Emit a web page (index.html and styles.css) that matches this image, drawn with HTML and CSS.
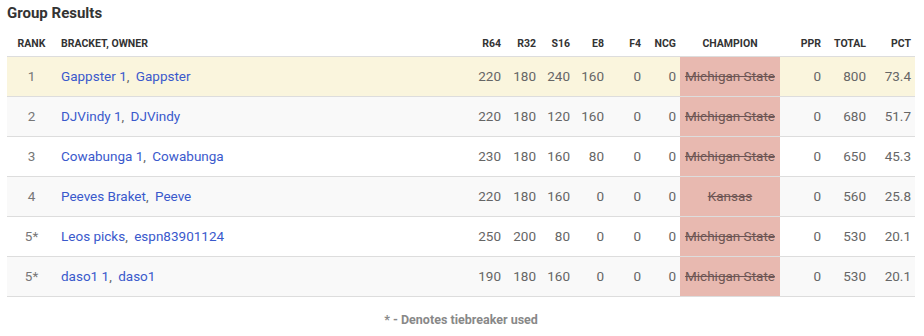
FILE: index.html
```html
<!DOCTYPE html>
<html>
<head>
<meta charset="utf-8">
<link rel="stylesheet" href="styles.css">
</head>
<body>
<div class="wrap">
  <h2 class="title">Group Results</h2>
  <table class="results">
    <colgroup>
      <col class="c-rank"><col class="c-bracket"><col class="c-n35"><col class="c-n35"><col class="c-n34"><col class="c-n34"><col class="c-n37"><col class="c-n35"><col class="c-champ"><col class="c-n45"><col class="c-n45"><col class="c-n45">
    </colgroup>
    <thead>
      <tr>
        <th class="rank">RANK</th>
        <th class="bracket">BRACKET, OWNER</th>
        <th class="num">R64</th>
        <th class="num">R32</th>
        <th class="num">S16</th>
        <th class="num">E8</th>
        <th class="num">F4</th>
        <th class="num">NCG</th>
        <th class="champ-h">CHAMPION</th>
        <th class="num">PPR</th>
        <th class="num">TOTAL</th>
        <th class="num">PCT</th>
      </tr>
    </thead>
    <tbody>
      <tr class="highlight">
        <td class="rank">1</td>
        <td class="bracket"><a href="#">Gappster 1</a>, <a class="owner" href="#">Gappster</a></td>
        <td class="num">220</td><td class="num">180</td><td class="num">240</td><td class="num">160</td><td class="num">0</td><td class="num">0</td>
        <td class="champ"><s>Michigan State</s></td>
        <td class="num">0</td><td class="num">800</td><td class="num">73.4</td>
      </tr>
      <tr class="alt">
        <td class="rank">2</td>
        <td class="bracket"><a href="#">DJVindy 1</a>, <a class="owner" href="#">DJVindy</a></td>
        <td class="num">220</td><td class="num">180</td><td class="num">120</td><td class="num">160</td><td class="num">0</td><td class="num">0</td>
        <td class="champ"><s>Michigan State</s></td>
        <td class="num">0</td><td class="num">680</td><td class="num">51.7</td>
      </tr>
      <tr>
        <td class="rank">3</td>
        <td class="bracket"><a href="#">Cowabunga 1</a>, <a class="owner" href="#">Cowabunga</a></td>
        <td class="num">230</td><td class="num">180</td><td class="num">160</td><td class="num">80</td><td class="num">0</td><td class="num">0</td>
        <td class="champ"><s>Michigan State</s></td>
        <td class="num">0</td><td class="num">650</td><td class="num">45.3</td>
      </tr>
      <tr class="alt">
        <td class="rank">4</td>
        <td class="bracket"><a href="#">Peeves Braket</a>, <a class="owner" href="#">Peeve</a></td>
        <td class="num">220</td><td class="num">180</td><td class="num">160</td><td class="num">0</td><td class="num">0</td><td class="num">0</td>
        <td class="champ"><s>Kansas</s></td>
        <td class="num">0</td><td class="num">560</td><td class="num">25.8</td>
      </tr>
      <tr>
        <td class="rank">5*</td>
        <td class="bracket"><a href="#">Leos picks</a>, <a class="owner" href="#">espn83901124</a></td>
        <td class="num">250</td><td class="num">200</td><td class="num">80</td><td class="num">0</td><td class="num">0</td><td class="num">0</td>
        <td class="champ"><s>Michigan State</s></td>
        <td class="num">0</td><td class="num">530</td><td class="num">20.1</td>
      </tr>
      <tr class="alt">
        <td class="rank">5*</td>
        <td class="bracket"><a href="#">daso1 1</a>, <a class="owner" href="#">daso1</a></td>
        <td class="num">190</td><td class="num">180</td><td class="num">160</td><td class="num">0</td><td class="num">0</td><td class="num">0</td>
        <td class="champ"><s>Michigan State</s></td>
        <td class="num">0</td><td class="num">530</td><td class="num">20.1</td>
      </tr>
    </tbody>
  </table>
  <p class="footnote">* - Denotes tiebreaker used</p>
</div>
</body>
</html>
```

FILE: styles.css
```css
html, body {
  margin: 0;
  padding: 0;
  background: #fff;
}
body {
  font-family: Roboto, "Liberation Sans", sans-serif;
  color: #555;
}
.wrap {
  padding: 0 9px 0 7px;
}
.title {
  margin: 0;
  padding: 5px 0 0 0;
  height: 25px;
  font-size: 15px;
  font-weight: 700;
  color: #333;
  line-height: 17px;
}
.results {
  width: 908px;
  table-layout: fixed;
  border-collapse: collapse;
  font-size: 13.5px;
}
.c-rank { width: 49px; }
.c-bracket { width: 414px; }
.c-n35 { width: 35px; }
.c-n34 { width: 34px; }
.c-n37 { width: 37px; }
.c-champ { width: 100px; }
.c-n45 { width: 45px; }
th {
  font-size: 10.5px;
  font-weight: 700;
  color: #333;
  height: 26px;
  padding: 0 4px 0 0;
  vertical-align: middle;
  border-bottom: 1px solid #ddd;
  white-space: nowrap;
}
td {
  height: 37px;
  padding: 0 4px 2px 0;
  border-bottom: 1px solid #ddd;
  vertical-align: middle;
  color: #666;
  white-space: nowrap;
}
.rank { text-align: center; padding-left: 0; padding-right: 0; }
td.rank { color: #777; }
.bracket { text-align: left; padding-left: 5px; }
.num { text-align: right; }
.champ-h { text-align: center; padding-left: 0; padding-right: 0; }
.champ {
  text-align: center;
  padding-left: 0;
  padding-right: 0;
  background: #e8b9b0;
  color: #6e5654;
}
.champ s {
  text-decoration-thickness: 1px;
}
.results a {
  color: #3a59cc;
  text-decoration: none;
}
.results a.owner {
  margin-left: 3px;
}
tr.highlight td { background: #faf5dd; }
tr.highlight td.champ, tr.alt td.champ { background: #e8b9b0; }
tr.alt td { background: #f9f9f9; }
.footnote {
  margin: 15px 0 0;
  text-align: center;
  font-size: 12.5px;
  font-weight: 700;
  color: #888;
}
```
